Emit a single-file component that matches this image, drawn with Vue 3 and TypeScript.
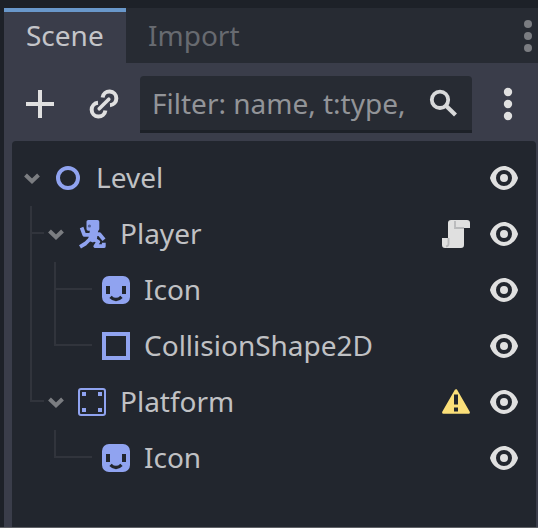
<script setup lang="ts">
type IconKind = 'node2d' | 'character' | 'sprite' | 'shape' | 'platform'

interface TreeNode {
  name: string
  icon: IconKind
  depth: number
  open: boolean
  badge?: 'script' | 'warning'
}

const nodes: TreeNode[] = [
  { name: 'Level', icon: 'node2d', depth: 0, open: true },
  { name: 'Player', icon: 'character', depth: 1, open: true, badge: 'script' },
  { name: 'Icon', icon: 'sprite', depth: 2, open: false },
  { name: 'CollisionShape2D', icon: 'shape', depth: 2, open: false },
  { name: 'Platform', icon: 'platform', depth: 1, open: true, badge: 'warning' },
  { name: 'Icon', icon: 'sprite', depth: 2, open: false },
]
</script>

<template>
  <div class="dock">
    <div class="tabs">
      <div class="tab active">Scene</div>
      <div class="tab">Import</div>
      <svg class="tab-menu" viewBox="0 0 10 36">
        <circle cx="5" cy="6" r="4" /><circle cx="5" cy="18" r="4" /><circle cx="5" cy="30" r="4" />
      </svg>
    </div>
    <div class="panel">
      <div class="toolbar">
        <svg class="icon" viewBox="0 0 16 16"><path d="M7 1h2v6h6v2H9v6H7V9H1V7h6z" fill="#e0e0e0" /></svg>
        <svg class="icon link" viewBox="0 0 32 32" fill="none" stroke="#e0e0e0" stroke-width="4">
          <path d="M14.6 9.4A6.9 6.9 0 1 1 22 17.2" />
          <path d="M17.4 22.6A6.9 6.9 0 1 1 10 14.8" />
          <path d="M11.2 20.8L20.8 11.2" stroke-width="3.6" stroke-linecap="round" />
        </svg>
        <div class="filter">
          <span>Filter: name, t:type,</span>
          <svg class="icon" viewBox="0 0 32 32" fill="none" stroke="#d8d9da">
            <circle cx="13" cy="12.8" r="8.2" stroke-width="3.8" />
            <path d="M18.5 18.3L28.5 28" stroke-width="4.2" />
          </svg>
        </div>
        <svg class="icon menu" viewBox="0 0 32 32" fill="#e0e0e0">
          <circle cx="16" cy="4" r="4.2" /><circle cx="16" cy="16" r="4.2" /><circle cx="16" cy="28" r="4.2" />
        </svg>
      </div>
      <div class="tree">
        <svg class="guides" viewBox="0 0 100 386" fill="none" stroke="#31343c" stroke-width="2">
          <path d="M19 65V260H32M19 92H32M43 121V204H80M43 148H80M43 289V316H80" />
        </svg>
        <div v-for="(node, i) in nodes" :key="i" class="row" :class="'depth-' + node.depth">
          <svg class="arrow" viewBox="0 0 24 24">
            <path v-if="node.open" d="M5.5 9L12 15.3L18.5 9" fill="none" stroke="#7b7d81" stroke-width="4" />
          </svg>
          <svg class="icon type" viewBox="0 0 32 32">
            <circle v-if="node.icon === 'node2d'" cx="16" cy="16" r="10" fill="none" stroke="#90a3f0" stroke-width="4" />
            <g v-else-if="node.icon === 'character'">
              <rect x="10.5" y="2" width="12.8" height="10.8" rx="1.8" fill="#90a3f0" />
              <g fill="none" stroke="#90a3f0" stroke-width="3.8" stroke-linejoin="round">
                <path d="M5.6 9.5L8.3 16.8H15" />
                <path d="M16 16.2H23.5L28 21.8" />
                <path d="M15 20L9.5 25.5L4 28.8" />
                <path d="M16.5 20.5L22.3 23.8L19.3 28.2H27.8V24.8" />
              </g>
              <path d="M14 12H22.3L20.8 21.5L17 24.5L12 22.5Z" fill="#90a3f0" />
              <circle cx="13.4" cy="8" r="1.6" fill="#526091" />
            </g>
            <g v-else-if="node.icon === 'sprite'">
              <rect x="2" y="2" width="28" height="28" rx="7" fill="#90a3f0" />
              <path d="M6 12H10V20H6ZM22 12H26V20H22Z" fill="#22262e" />
              <path d="M10.5 22.8Q16 28.3 21.5 22.8" fill="none" stroke="#22262e" stroke-width="3.2" />
            </g>
            <rect v-else-if="node.icon === 'shape'" x="4" y="4" width="24" height="24" fill="none" stroke="#90a3f0" stroke-width="4" />
            <g v-else fill="#90a3f0">
              <rect x="3" y="3" width="26" height="26" rx="2" fill="none" stroke="#90a3f0" stroke-width="2" />
              <path d="M6 6h4v4H6zM22 6h4v4H22zM6 22h4v4H6zM22 22h4v4H22z" />
            </g>
          </svg>
          <span class="name">{{ node.name }}</span>
          <svg v-if="node.badge === 'script'" class="icon badge" viewBox="0 0 32 32">
            <path d="M11 2H27Q30 2 30 5V10H24V27Q24 30 21 30H5Q2 30 2 27V20H8V5Q8 2 11 2Z" fill="#e0e0e0" />
            <path d="M15 3V10H24M8.5 20V26Q8.5 28 6 28.5" fill="none" stroke="#b8b9bb" stroke-width="1.8" />
          </svg>
          <svg v-else-if="node.badge === 'warning'" class="icon badge" viewBox="0 0 32 32">
            <path d="M16 4.5L28.6 26.5H3.4Z" fill="#fbdf79" stroke="#fbdf79" stroke-width="2.6" stroke-linejoin="round" />
            <path d="M14 8.5H18V18.5H14ZM14 21.5H18V25.5H14Z" fill="#22262e" />
          </svg>
          <svg class="icon" viewBox="0 0 16 16">
            <path fill="#e0e0e0" fill-rule="evenodd" d="M8 2C5.443 2 2.209 3.948 1.045 7.705a1 1 0 0 0 0 .596C2.18 12.032 5.477 14 8 14s5.82-1.968 6.955-5.7a1 1 0 0 0 0-.595C13.792 3.948 10.557 2 8 2zm0 2a4 4 0 1 1 0 8 4 4 0 0 1 0-8zm0 2a2 2 0 1 0 0 4 2 2 0 0 0 0-4z" />
          </svg>
        </div>
      </div>
    </div>
  </div>
</template>

<style>
body { margin: 0; overflow: hidden; }
</style>

<style scoped>
.dock {
  box-sizing: border-box;
  width: 538px;
  height: 528px;
  padding: 8px 0 0 4px;
  display: flex;
  flex-direction: column;
  background: #1d2128;
  border-bottom: 1px solid #606267;
  font-family: "Noto Sans", sans-serif;
  font-size: 28px;
  line-height: 38px;
  color: #c0c1c4;
  overflow: hidden;
}
.tabs { display: flex; height: 55px; background: #272b33; flex: none; }
.tab { box-sizing: border-box; padding: 8px 22px 0; color: #676a70; white-space: nowrap; }
.tab.active { width: 122px; padding-top: 4px; border-top: 4px solid #6998cb; background: #3a3d4a; color: #c4c5c9; }
.tab-menu { width: 10px; height: 36px; margin: 10px 5px 0 auto; fill: #7b7d82; flex: none; }
.panel { flex: 1; min-height: 0; display: flex; flex-direction: column; background: #3a3d4a; padding: 13px 2px 0 8px; }
.toolbar { display: flex; align-items: flex-start; height: 57px; padding-left: 12px; flex: none; }
.icon { width: 32px; height: 32px; flex: none; display: block; }
.toolbar > .icon { margin-top: 12px; }
.toolbar > .link { margin-left: 32px; }
.filter {
  box-sizing: border-box;
  width: 332px;
  height: 57px;
  margin-left: 20px;
  padding: 0 13px 0 12px;
  display: flex;
  align-items: center;
  justify-content: space-between;
  background: #272b33;
  border-bottom: 3px solid #1d2128;
  border-radius: 4px 4px 0 0;
  color: #929498;
  white-space: nowrap;
}
.filter span { padding-bottom: 1px; }
.toolbar > .menu { margin-left: 20px; overflow: visible; }
.tree { position: relative; flex: 1; margin-top: 8px; padding-top: 9px; background: #22262e; border-radius: 4px 4px 0 0; }
.guides { position: absolute; left: 0; top: 0; width: 100px; height: 386px; }
.row { display: flex; align-items: center; height: 56px; padding-right: 16px; }
.depth-0 { padding-left: 8px; }
.depth-1 { padding-left: 32px; }
.depth-2 { padding-left: 56px; }
.arrow { width: 24px; height: 24px; flex: none; }
.type { margin-left: 8px; }
.name { flex: 1; margin-left: 12px; padding-bottom: 2px; white-space: nowrap; }
.badge { margin-right: 16px; }
</style>
